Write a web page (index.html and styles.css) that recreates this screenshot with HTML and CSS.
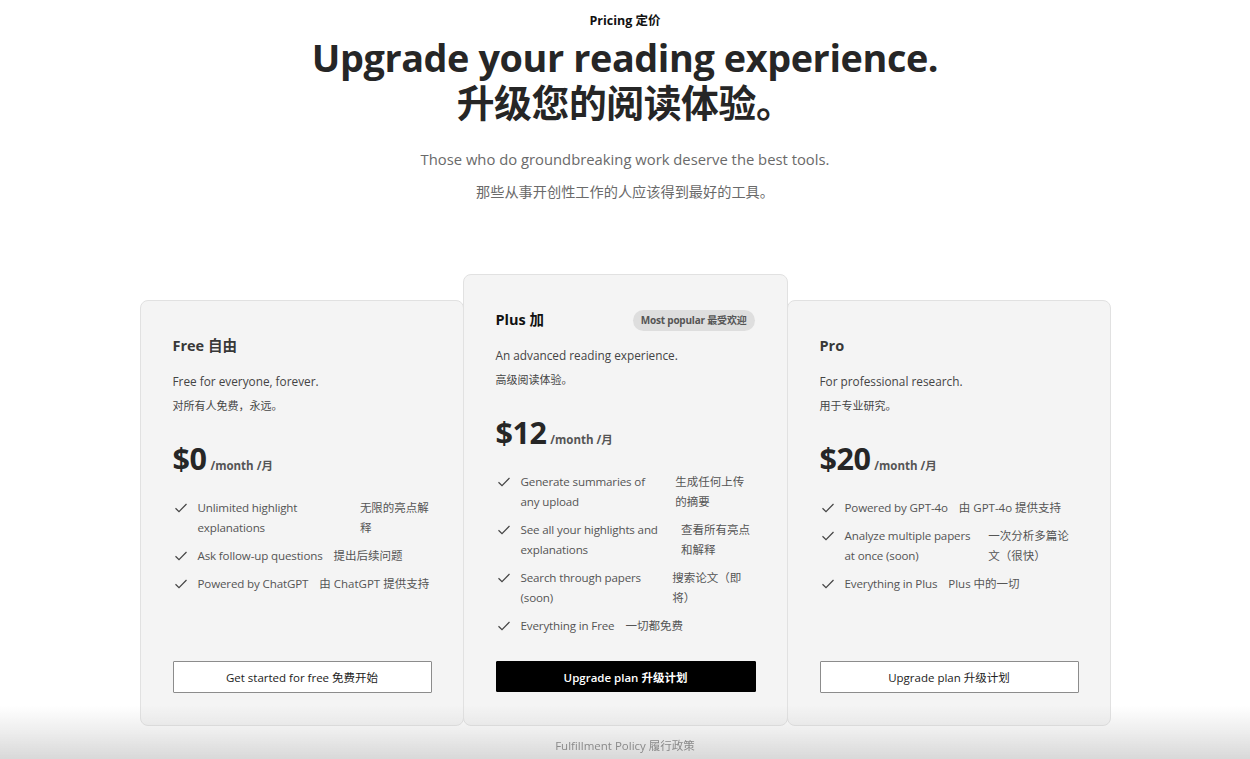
FILE: index.html
```html
<!DOCTYPE html>
<html lang="en">
<head>
<meta charset="utf-8">
<title>Pricing</title>
<link rel="stylesheet" href="styles.css">
</head>
<body>
<main class="page">
  <header class="hero">
    <p class="eyebrow">Pricing 定价</p>
    <h1 class="headline"><span class="headline-line">Upgrade your reading experience.</span><span class="headline-line">升级您的阅读体验。</span></h1>
    <p class="lead">Those who do groundbreaking work deserve the best tools.</p>
    <p class="lead-cn">那些从事开创性工作的人应该得到最好的工具。</p>
  </header>

  <section class="plans">
    <article class="card">
      <div class="card-head"><h2 class="card-title">Free 自由</h2></div>
      <p class="card-desc">Free for everyone, forever.</p>
      <p class="card-desc-cn">对所有人免费，永远。</p>
      <div class="price"><span class="amount">$0</span><span class="per">/month /月</span></div>
      <ul class="features">
        <li><svg class="check" viewBox="0 0 14 14"><path d="M1.5 7.2 L5 10.6 L12.5 3"/></svg><span class="en">Unlimited highlight explanations</span><span class="cn">无限的亮点解释</span></li>
        <li><svg class="check" viewBox="0 0 14 14"><path d="M1.5 7.2 L5 10.6 L12.5 3"/></svg><span class="en">Ask follow-up questions</span><span class="cn">提出后续问题</span></li>
        <li><svg class="check" viewBox="0 0 14 14"><path d="M1.5 7.2 L5 10.6 L12.5 3"/></svg><span class="en">Powered by ChatGPT</span><span class="cn">由 ChatGPT 提供支持</span></li>
      </ul>
      <button class="btn btn-outline">Get started for free 免费开始</button>
    </article>

    <article class="card card-featured">
      <div class="card-head"><h2 class="card-title title-dark">Plus 加</h2><span class="badge">Most popular 最受欢迎</span></div>
      <p class="card-desc">An advanced reading experience.</p>
      <p class="card-desc-cn">高级阅读体验。</p>
      <div class="price"><span class="amount">$12</span><span class="per">/month /月</span></div>
      <ul class="features">
        <li><svg class="check" viewBox="0 0 14 14"><path d="M1.5 7.2 L5 10.6 L12.5 3"/></svg><span class="en">Generate summaries of any upload</span><span class="cn">生成任何上传的摘要</span></li>
        <li><svg class="check" viewBox="0 0 14 14"><path d="M1.5 7.2 L5 10.6 L12.5 3"/></svg><span class="en">See all your highlights and explanations</span><span class="cn">查看所有亮点和解释</span></li>
        <li><svg class="check" viewBox="0 0 14 14"><path d="M1.5 7.2 L5 10.6 L12.5 3"/></svg><span class="en">Search through papers (soon)</span><span class="cn">搜索论文（即将）</span></li>
        <li><svg class="check" viewBox="0 0 14 14"><path d="M1.5 7.2 L5 10.6 L12.5 3"/></svg><span class="en">Everything in Free</span><span class="cn">一切都免费</span></li>
      </ul>
      <button class="btn btn-solid">Upgrade plan 升级计划</button>
    </article>

    <article class="card">
      <div class="card-head"><h2 class="card-title">Pro</h2></div>
      <p class="card-desc">For professional research.</p>
      <p class="card-desc-cn">用于专业研究。</p>
      <div class="price"><span class="amount">$20</span><span class="per">/month /月</span></div>
      <ul class="features">
        <li><svg class="check" viewBox="0 0 14 14"><path d="M1.5 7.2 L5 10.6 L12.5 3"/></svg><span class="en">Powered by GPT-4o</span><span class="cn">由 GPT-4o 提供支持</span></li>
        <li><svg class="check" viewBox="0 0 14 14"><path d="M1.5 7.2 L5 10.6 L12.5 3"/></svg><span class="en">Analyze multiple papers at once (soon)</span><span class="cn">一次分析多篇论文（很快）</span></li>
        <li><svg class="check" viewBox="0 0 14 14"><path d="M1.5 7.2 L5 10.6 L12.5 3"/></svg><span class="en">Everything in Plus</span><span class="cn">Plus 中的一切</span></li>
      </ul>
      <button class="btn btn-outline">Upgrade plan 升级计划</button>
    </article>
  </section>
</main>

<footer class="footer">
  <a class="footer-link" href="#">Fulfillment Policy 履行政策</a>
</footer>
</body>
</html>
```

FILE: styles.css
```css
* { box-sizing: border-box; }

html, body {
  margin: 0;
  padding: 0;
  background: #ffffff;
}

body {
  font-family: "Open Sans", "Noto Sans CJK SC", sans-serif;
  color: #222;
}

.page {
  width: 100%;
  padding-top: 12px;
}

.hero {
  text-align: center;
}

.eyebrow {
  margin: 0;
  font-size: 12.5px;
  line-height: 18px;
  font-weight: 700;
  color: #111;
}

.headline {
  margin: 5px 0 0;
  font-size: 37.8px;
  font-weight: 700;
  color: #262626;
  letter-spacing: -0.4px;
}

.headline-line {
  display: block;
  line-height: 45px;
}

.lead {
  margin: 22px 0 0;
  font-size: 14.8px;
  line-height: 24px;
  color: #6a6a6a;
}

.lead-cn {
  margin: 11px 0 0;
  font-size: 14.2px;
  line-height: 20px;
  color: #6a6a6a;
}

.plans {
  width: 971px;
  margin: 72px auto 0;
  display: flex;
  align-items: flex-end;
}

.card {
  display: flex;
  flex-direction: column;
  flex: 0 0 324px;
  width: 324px;
  min-height: 426px;
  padding: 35px 31px 32px 32px;
  background: #f4f4f4;
  border: 1px solid #e1e1e1;
  border-radius: 8px;
}

.card + .card {
  margin-left: -1px;
}

.card-featured {
  position: relative;
  z-index: 1;
  flex-basis: 325px;
  width: 325px;
  min-height: 452px;
}

.card-head {
  display: flex;
  align-items: center;
  justify-content: space-between;
  height: 20px;
}

.card-title {
  margin: 0;
  font-size: 14.5px;
  line-height: 20px;
  font-weight: 700;
  color: #383838;
}

.title-dark {
  color: #111;
}

.badge {
  margin-right: 1px;
  padding: 0 8px;
  height: 21px;
  line-height: 21px;
  border-radius: 11px;
  background: #dedede;
  color: #555;
  font-size: 10px;
  font-weight: 700;
  letter-spacing: -0.2px;
}

.card-desc {
  margin: 16px 0 0;
  font-size: 11.8px;
  line-height: 18px;
  color: #444;
}

.card-desc-cn {
  margin: 7px 0 0;
  font-size: 11px;
  line-height: 18px;
  color: #444;
}

.price {
  margin-top: 23px;
  display: flex;
  align-items: baseline;
  height: 40px;
}

.amount {
  font-size: 30.5px;
  line-height: 40px;
  font-weight: 700;
  color: #262626;
  letter-spacing: -0.5px;
}

.per {
  margin-left: 4px;
  font-size: 11.5px;
  font-weight: 700;
  color: #555;
}

.features {
  list-style: none;
  margin: 20px 0 0;
  padding: 0;
  display: flex;
  flex-direction: column;
  gap: 8px;
}

.features li {
  display: flex;
  align-items: flex-start;
  font-size: 11.6px;
  line-height: 20px;
  color: #555;
  letter-spacing: -0.15px;
}

.check {
  flex: 0 0 14px;
  width: 14px;
  height: 14px;
  margin: 3px 10px 0 1px;
  fill: none;
  stroke: #444;
  stroke-width: 1.2;
}

.en {
  flex: 0 1 auto;
}

.cn {
  flex: 0 1 auto;
  margin-left: 11px;
  font-size: 11.5px;
  letter-spacing: 0;
}

.btn {
  margin-top: auto;
  width: 100%;
  height: 32px;
  font-family: "Open Sans", "Noto Sans CJK SC", sans-serif;
  font-size: 11.5px;
  cursor: pointer;
  border-radius: 1px;
}

.btn-outline {
  background: #fff;
  border: 1px solid #8c8c8c;
  color: #222;
}

.btn-solid {
  height: 31px;
  margin-bottom: 1px;
  background: #000;
  border: 1px solid #000;
  color: #fff;
  font-weight: 600;
}

.footer {
  position: fixed;
  left: 0;
  right: 0;
  bottom: 0;
  height: 54px;
  z-index: 5;
  display: flex;
  align-items: flex-end;
  justify-content: center;
  padding-bottom: 5px;
  background: linear-gradient(to bottom, rgba(200,200,200,0) 0%, rgba(200,200,200,0.25) 40%, rgba(200,200,200,0.7) 100%);
}

.footer-link {
  font-size: 11.5px;
  line-height: 16px;
  color: #8a8a8a;
  text-decoration: none;
}
```
